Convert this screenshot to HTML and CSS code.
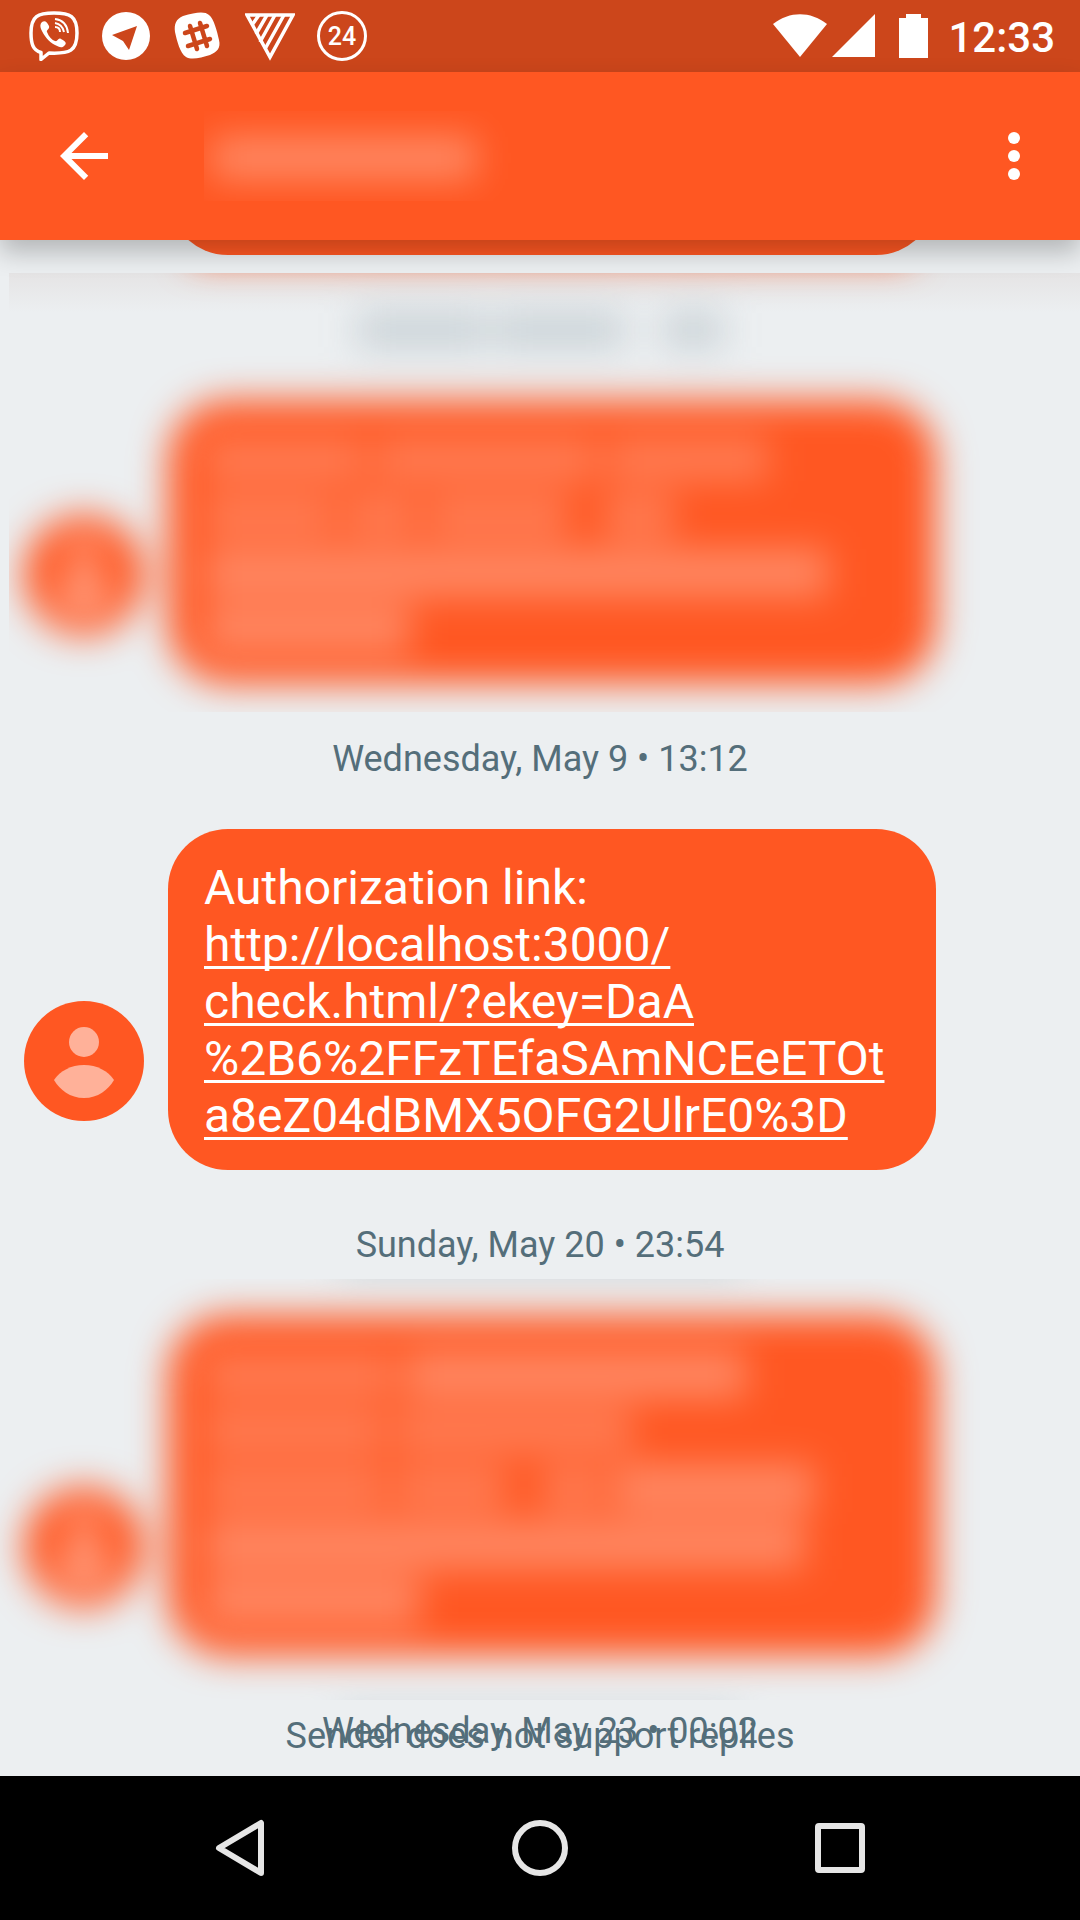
FILE: index.html
```html
<!DOCTYPE html>
<html lang="en">
<head>
<meta charset="utf-8">
<meta name="viewport" content="width=device-width, initial-scale=1">
<title>Messages</title>
<link rel="stylesheet" href="styles.css">
</head>
<body>
<svg class="sprite" aria-hidden="true">
  <symbol id="person" viewBox="0 0 120 120">
    <circle cx="60" cy="41" r="15"/>
    <path d="M30 79C36 70 47 64 60 64s24 6 30 15c-6 10-16 18-30 18S36 89 30 79z"/>
  </symbol>
</svg>

<div class="status-bar">
  <div class="status-group">
    <svg class="status-icon" viewBox="0 0 50 50" fill="none" stroke="#fff" stroke-width="3.500" stroke-linejoin="round">
      <path d="M25 2C9 2 2 5 2 22c0 11 2 17 10 19.500V48.500L20 42c21 1 28-2 28-20C48 5 41 2 25 2z"/>
      <path d="M13 11c3-2 5 0 7 4 1 3-3 4-2 6 2 5 5 8 8 9 3 1 3-4 6-2 4 2 6 4 4 6-3 4-6 2-10 0C20 31 15 25 12 18c-1-3-1-5 1-7z" fill="#fff" stroke="none"/>
      <path d="M26 8c8 1 12 5 13 14M26 12c5 1 8 4 9 9M26 16c3 0 5 2 5 5" stroke-width="2"/>
    </svg>
    <svg class="status-icon" viewBox="0 0 50 50">
      <circle cx="25" cy="25" r="24" fill="#fff"/>
      <path d="M11 24L36 15 28 39 22 30z" fill="#cc461b"/>
    </svg>
    <svg class="status-icon" viewBox="0 0 50 50">
      <path d="M10 5C23 1 32 0 36 4c5 4 8 16 10 25 2 8-2 12-9 15-9 3-19 5-24 2C7 42 4 30 2 21 1 13 3 8 10 5z" fill="#fff"/>
      <g stroke="#cc461b" stroke-width="4.500" stroke-linecap="round" fill="none"><path d="M12 22l22-7M15 35l22-7M17 15l7 23M27 12l7 23"/></g>
    </svg>
    <svg class="status-icon" viewBox="0 0 50 50" fill="none" stroke="#fff" stroke-width="3.500">
      <path d="M2 4h46L25 46z"/>
      <path d="M14 4L7 14M22 4L11 23M30 4L15 31M39 4L20 38"/>
    </svg>
    <span class="count">24</span>
  </div>
  <div class="status-group status-right">
    <svg class="wifi" viewBox="0 0 54 44"><path d="M27 43L0 10C17-3 37-3 54 10z" fill="#fff"/></svg>
    <svg class="signal" viewBox="0 0 43 44"><path d="M0 43H43V0z" fill="#fff"/></svg>
    <svg class="battery" viewBox="0 0 29 44"><path d="M0 4h7V0h15v4h7v40H0z" fill="#fff"/></svg>
    <time class="clock">12:33</time>
  </div>
</div>

<header class="app-bar">
  <button class="icon-button" aria-label="Back"><svg viewBox="0 0 24 24"><path d="M20 11H7.830l5.590-5.590L12 4l-8 8 8 8 1.410-1.410L7.830 13H20v-2z"/></svg></button>
  <div class="title" aria-hidden="true"><span class="title-bar"></span></div>
  <button class="icon-button" aria-label="More options"><svg viewBox="0 0 24 24"><circle cx="12" cy="6" r="2"/><circle cx="12" cy="12" r="2"/><circle cx="12" cy="18" r="2"/></svg></button>
</header>

<main class="thread">
  <div class="message message-cut"><div class="bubble"></div></div>

  <section class="obscured obscured-first" aria-hidden="true">
    <div class="soft">
      <div class="date"><i class="word" style="width:130px"></i><i class="word" style="width:130px"></i><i class="word word-end" style="width:60px"></i></div>
      <div class="message">
        <svg class="avatar"><use href="#person"/></svg>
        <div class="bubble">
          <div class="line"><i class="word" style="width:160px"></i><i class="word" style="width:220px"></i><i class="word" style="width:160px"></i></div>
          <div class="line"><i class="word" style="width:130px"></i><i class="word" style="width:70px"></i><i class="word" style="width:140px"></i><i class="word word-end" style="width:70px"></i></div>
          <div class="line link-line"><i class="word" style="width:624px"></i></div>
          <div class="line link-line"><i class="word" style="width:206px"></i></div>
        </div>
      </div>
    </div>
  </section>

  <div class="date">Wednesday, May 9 • 13:12</div>
  <div class="message">
    <svg class="avatar"><use href="#person"/></svg>
    <div class="bubble">Authorization link:<br><a href="http://localhost:3000/check.html/?ekey=DaA%2B6%2FFzTEfaSAmNCEeETOta8eZ04dBMX5OFG2UlrE0%3D">http://localhost:3000/<br>check.html/?ekey=DaA<br>%2B6%2FFzTEfaSAmNCEeETOt<br>a8eZ04dBMX5OFG2UlrE0%3D</a></div>
  </div>
  <div class="date">Sunday, May 20 • 23:54</div>

  <section class="obscured obscured-second" aria-hidden="true">
    <div class="soft">
      <div class="message">
        <svg class="avatar"><use href="#person"/></svg>
        <div class="bubble">
          <div class="line"><i class="word" style="width:190px"></i><i class="word bright" style="width:340px"></i></div>
          <div class="line"><i class="word" style="width:180px"></i><i class="word" style="width:236px"></i></div>
          <div class="line"><i class="word" style="width:180px"></i><i class="word" style="width:110px"></i><i class="word word-end" style="width:60px"></i><i class="word bright" style="width:200px"></i></div>
          <div class="line link-line"><i class="word" style="width:600px"></i></div>
          <div class="line link-line"><i class="word" style="width:216px"></i></div>
        </div>
      </div>
    </div>
  </section>

  <div class="date">Wednesday, May 23 • 00:02</div>
  <p class="no-reply">Sender does not support replies</p>
</main>

<nav class="nav-bar">
  <button class="nav-button" aria-label="Back"><svg viewBox="0 0 60 60"><path d="M51 5V55L9 30z"/></svg></button>
  <button class="nav-button" aria-label="Home"><svg viewBox="0 0 60 60"><circle cx="30" cy="30" r="25"/></svg></button>
  <button class="nav-button" aria-label="Recent apps"><svg viewBox="0 0 60 60"><rect x="8" y="8" width="44" height="44" rx="1"/></svg></button>
</nav>
</body>
</html>
```

FILE: styles.css
```css
* { box-sizing: border-box; }

body {
  margin: 0;
  min-height: 100vh;
  display: flex;
  flex-direction: column;
  background: #eceff1;
  color: #546e7a;
  font-family: Roboto, sans-serif;
  font-size: 36px;
  line-height: 44px;
}

button {
  display: flex;
  align-items: center;
  justify-content: center;
  padding: 0;
  border: 0;
  background: none;
}

.sprite { display: none; }

.status-bar {
  display: flex;
  justify-content: space-between;
  align-items: center;
  height: 72px;
  padding: 0 25px 0 29px;
  background: #cc461b;
  color: #fff;
}

.status-group { display: flex; align-items: center; gap: 22px; }
.status-icon { width: 50px; height: 50px; }

.count {
  width: 50px;
  height: 50px;
  border: 3px solid #fff;
  border-radius: 50%;
  font-size: 25px;
  font-weight: 500;
  line-height: 46px;
  text-align: center;
}

.status-right { gap: 0; }
.wifi { width: 54px; height: 44px; margin-right: 5px; }
.signal { width: 43px; height: 44px; margin-right: 24px; }
.battery { width: 29px; height: 44px; margin-right: 20px; }
.clock { padding-top: 3px; font-size: 42px; font-weight: 500; }

.app-bar {
  position: relative;
  z-index: 1;
  display: flex;
  align-items: center;
  gap: 84px;
  height: 168px;
  padding: 0 30px 0 48px;
  background: #ff5722;
  box-shadow: 0 12px 24px rgba(0, 0, 0, 0.24);
}

.icon-button { width: 72px; height: 72px; }
.icon-button svg { width: 72px; height: 72px; fill: #fff; }

.title { flex: 1; padding: 26px 8px 22px; overflow: hidden; }

.title-bar {
  display: block;
  width: 264px;
  height: 42px;
  background: rgba(255, 255, 255, 0.3);
  filter: blur(18px);
}

.thread { position: relative; flex: 1; overflow: hidden; }

.date { padding: 0 24px; text-align: center; }

.message {
  display: flex;
  align-items: flex-end;
  gap: 24px;
  margin: 48px 144px 53px 24px;
}

.avatar {
  flex: none;
  width: 120px;
  height: 120px;
  margin-bottom: 49px;
  border-radius: 50%;
  background: #ff5722;
  fill: #ffb199;
}

.bubble {
  flex: 1;
  min-width: 0;
  padding: 30px 36px 26px;
  border-radius: 60px;
  background: #ff5722;
  color: #fff;
  font-size: 48px;
  line-height: 57px;
  overflow-wrap: anywhere;
}

.bubble a {
  color: inherit;
  text-decoration-thickness: 3px;
  text-underline-offset: 5px;
  text-decoration-skip-ink: none;
}

/* Only the tail of the oldest message shows below the app bar. */
.message-cut { margin: -105px 144px 18px 168px; }
.message-cut .bubble { height: 120px; }

/* Private messages are softened inside a hard-edged area. */
.soft { position: relative; filter: blur(18px); }
.obscured .message { margin-bottom: 0; }

.obscured-first {
  margin-bottom: 25px;
  clip-path: inset(0 0 0 9px);
  background: linear-gradient(rgba(120, 50, 30, 0.06), transparent 40px);
}

.obscured-first .soft { padding: 35px 0 28px; }

/* Neighbouring bubble and dates that bleed into the softened areas. */
.obscured-first .soft::before {
  content: "";
  position: absolute;
  top: -60px;
  right: 168px;
  left: 192px;
  height: 46px;
  background: #ff5722;
}

.obscured-second { margin: 12px 0 9px; clip-path: inset(0); }
.obscured-second .soft { padding: 36px 0 44px; }
.obscured-second .message { margin-top: 0; }

.obscured-second .soft::before,
.obscured-second .soft::after {
  content: "";
  position: absolute;
  right: 340px;
  left: 340px;
  height: 32px;
  background: rgba(84, 110, 122, 0.3);
}

.obscured-second .soft::before { top: -44px; }
.obscured-second .soft::after { bottom: -48px; }

.line { display: flex; align-items: center; gap: 12px; height: 57px; }
.word { height: 44px; background: rgba(255, 255, 255, 0.22); }
.link-line .word, .bright { height: 48px; background: rgba(255, 255, 255, 0.29); }
.line .word-end { margin-left: 24px; }

.soft .date { display: flex; justify-content: center; align-items: center; gap: 8px; height: 44px; }
.date .word { height: 36px; background: rgba(84, 110, 122, 0.22); }
.date .word-end { margin-left: 30px; }

.no-reply {
  position: absolute;
  right: 0;
  bottom: 18px;
  left: 0;
  margin: 0;
  text-align: center;
}

.nav-bar { display: flex; height: 144px; padding: 0 90px; background: #000; }
.nav-button { flex: 1; }

.nav-button svg {
  width: 60px;
  height: 60px;
  fill: none;
  stroke: #e6e6e6;
  stroke-width: 6;
  stroke-linejoin: round;
}
```
